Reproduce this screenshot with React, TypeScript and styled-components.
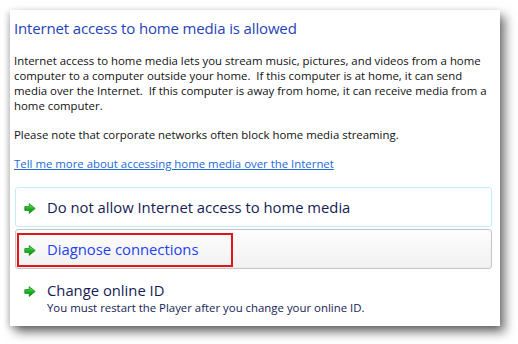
import React from 'react';
import styled, { createGlobalStyle } from 'styled-components';

const GlobalStyle = createGlobalStyle`
  html, body {
    margin: 0;
    padding: 0;
    background: #ffffff;
  }
  body {
    font-family: 'Open Sans', 'Noto Sans', sans-serif;
  }
`;

type Option = {
  label: string;
  note?: string;
  variant: 'plain' | 'focused' | 'hover';
};

const options: Option[] = [
  { label: 'Do not allow Internet access to home media', variant: 'focused' },
  { label: 'Diagnose connections', variant: 'hover' },
  {
    label: 'Change online ID',
    note: 'You must restart the Player after you change your online ID.',
    variant: 'plain',
  },
];

function GreenArrow(): JSX.Element {
  return (
    <ArrowIcon viewBox="0 0 12 11" width="12" height="11">
      <defs>
        <linearGradient id="arrowFill" x1="0" y1="0" x2="0" y2="1">
          <stop offset="0" stopColor="#7be37b" />
          <stop offset="0.5" stopColor="#22b422" />
          <stop offset="1" stopColor="#0c8c12" />
        </linearGradient>
      </defs>
      <polygon
        points="0.8,3.6 5.2,3.6 5.2,0.6 11.2,5.5 5.2,10.4 5.2,7.4 0.8,7.4"
        fill="url(#arrowFill)"
        stroke="#138a1a"
        strokeWidth="0.8"
        strokeLinejoin="round"
      />
    </ArrowIcon>
  );
}

export default function App(): JSX.Element {
  return (
    <Page>
      <GlobalStyle />
      <Window>
        <Title>Internet access to home media is allowed</Title>
        <Body>
          Internet access to home media lets you stream music, pictures, and videos from a home
          <br />
          computer to a computer outside your home.{'\u00a0'} If this computer is at home, it can send
          <br />
          media over the Internet.{'\u00a0'} If this computer is away from home, it can receive media from a
          <br />
          home computer.
        </Body>
        <Body>Please note that corporate networks often block home media streaming.</Body>
        <Link href="#">Tell me more about accessing home media over the Internet</Link>
        <Options>
          {options.map((o) => (
            <CommandLink key={o.label} variant={o.variant}>
              {o.variant === 'hover' && <Highlight />}
              <GreenArrow />
              <CommandText>
                <CommandLabel variant={o.variant}>{o.label}</CommandLabel>
                {o.note && <CommandNote>{o.note}</CommandNote>}
              </CommandText>
            </CommandLink>
          ))}
        </Options>
      </Window>
    </Page>
  );
}

const Page = styled.div`
  width: 518px;
  height: 344px;
  padding: 10px 0 0 10px;
  box-sizing: border-box;
  overflow: hidden;
`;

const Window = styled.div`
  width: 490px;
  height: 316px;
  box-sizing: border-box;
  background: #ffffff;
  padding: 8px 8px 0 4px;
  box-shadow: 5px 6px 10px rgba(0, 0, 0, 0.55), -2px 2px 6px rgba(0, 0, 0, 0.18);
`;

const Title = styled.h1`
  margin: 0 0 15px 0;
  font-size: 15px;
  line-height: 20px;
  font-weight: 400;
  letter-spacing: -0.15px;
  color: #1f44b8;
`;

const Body = styled.p`
  margin: 0 0 14px 0;
  font-size: 11.4px;
  line-height: 15px;
  color: #111111;
  white-space: nowrap;
`;

const Link = styled.a`
  display: block;
  font-size: 11.4px;
  line-height: 15px;
  color: #1d6ad8;
  text-decoration: underline;
  margin-bottom: 16px;
`;

const Options = styled.div`
  display: flex;
  flex-direction: column;
  gap: 2px;
  margin-left: 1px;
`;

const CommandLink = styled.div<{ variant: Option['variant'] }>`
  position: relative;
  display: flex;
  align-items: flex-start;
  gap: 11px;
  padding: ${(p) => (p.variant === 'plain' ? '9px 10px 4px 8px' : '10px 10px 9px 8px')};
  border-radius: 3px;
  border: 1px solid
    ${(p) =>
      p.variant === 'focused' ? '#c5eefa' : p.variant === 'hover' ? '#c6c6c6' : 'transparent'};
  background: ${(p) =>
    p.variant === 'hover' ? 'linear-gradient(#fdfdfd, #f1f1f1)' : '#ffffff'};
  box-shadow: ${(p) => (p.variant === 'hover' ? 'inset 0 0 2px rgba(0,0,0,0.06)' : 'none')};
`;

const ArrowIcon = styled.svg`
  flex: none;
  margin-top: 5px;
`;

const CommandText = styled.div`
  display: flex;
  flex-direction: column;
`;

const CommandLabel = styled.span<{ variant: Option['variant'] }>`
  font-size: 14.8px;
  line-height: 19px;
  color: ${(p) => (p.variant === 'hover' ? '#1f3ff0' : '#151c55')};
`;

const CommandNote = styled.span`
  font-size: 11.4px;
  line-height: 16px;
  color: #151c55;
`;

const Highlight = styled.div`
  position: absolute;
  left: 1px;
  top: 3px;
  width: 216px;
  height: 34px;
  box-sizing: border-box;
  border: 2px solid #e3141c;
`;
